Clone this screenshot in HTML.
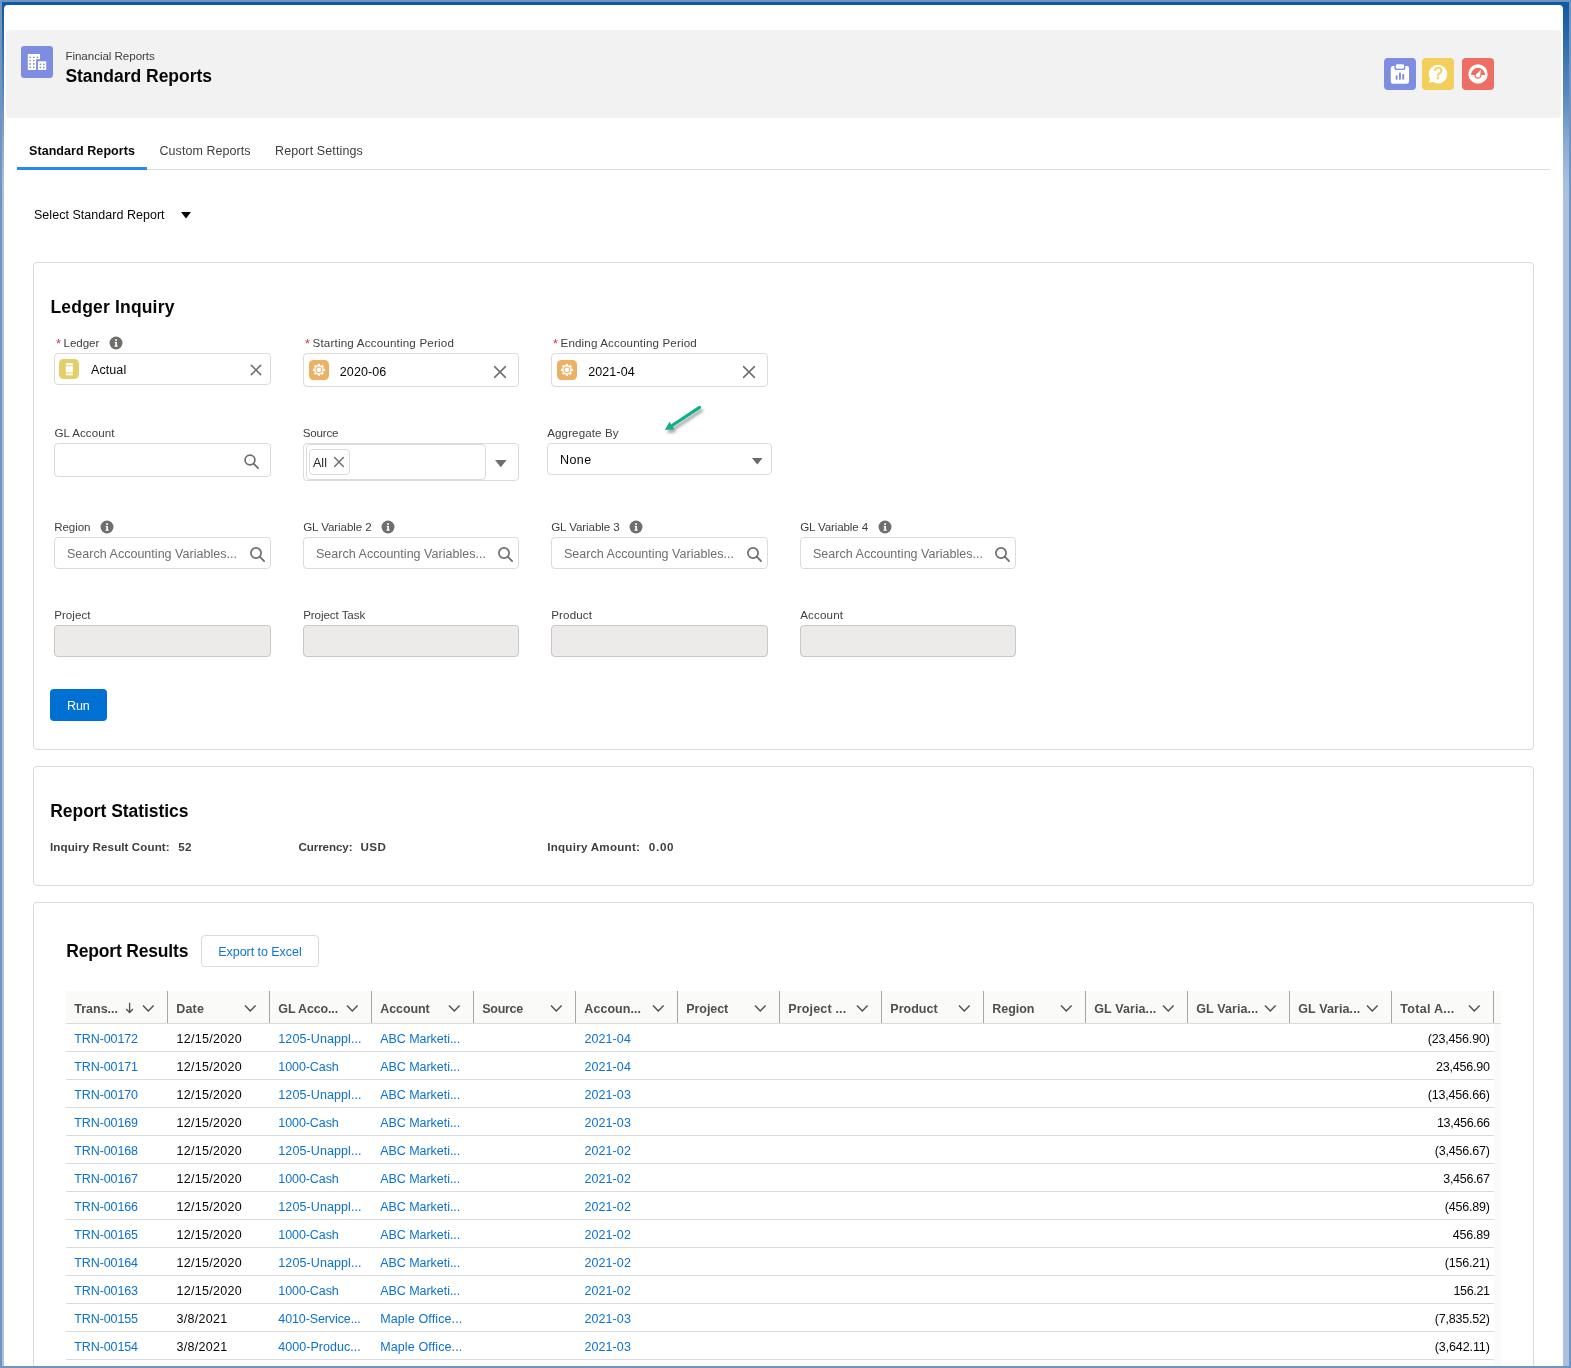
<!DOCTYPE html>
<html lang="en"><head><meta charset="utf-8"><title>Standard Reports</title>
<style>
html,body{margin:0;padding:0}
body{width:1571px;height:1368px;position:relative;overflow:hidden;background:#7193c2;font-family:"Liberation Sans",sans-serif;color:#080707;font-size:12px}
body *{box-sizing:border-box}
.abs,.t,.box,.card{position:absolute}
svg.abs{overflow:visible}
.frame{position:absolute;left:2px;top:2px;width:1567px;height:1364px;background:linear-gradient(to bottom,#1059a1 0,#2466aa 30px,#4079b5 60px,#5f8ec3 100px,#8aabd3 140px,#a8bfde 180px,#adc0dc 200px,#adc0dc 100%)}
.panel{position:absolute;left:4px;top:5px;width:1559px;height:1361px;background:#fff;border-radius:4px 4px 0 0}
.hdr{position:absolute;left:6px;top:30px;width:1555px;height:88px;background:#f3f2f2;border-radius:4px}
.t{white-space:nowrap;line-height:1;text-decoration:none;color:#080707}
.card{left:33px;width:1501px;border:1px solid #dddbda;border-radius:4px;background:#fff}
.box{border:1px solid #dddbda;border-radius:4px;background:#fff}
.dis{background:#ecebea;border-color:#c9c7c5}
.root{position:absolute;left:0;top:0;width:1571px;height:1368px;will-change:transform}
</style></head>
<body>
<div class="root">
<div class="frame"></div>
<div class="panel"></div>
<div class="hdr"></div>
<svg class="abs" style="left:21px;top:46px" width="32" height="32" viewBox="0 0 32 32"><rect width="32" height="32" rx="3.2" fill="#7f8de1"/><path d="M6.8 8.1h12.2v5.2h-3.9v10.6H6.8z" fill="#fff"/><rect x="17" y="15.3" width="8.2" height="8.6" fill="#fff"/><rect x="8.299999999999999" y="10.399999999999999" width="1.6" height="1.6" rx=".5" fill="#7f8de1"/><rect x="12.0" y="10.399999999999999" width="1.6" height="1.6" rx=".5" fill="#7f8de1"/><rect x="15.5" y="10.399999999999999" width="1.6" height="1.6" rx=".5" fill="#7f8de1"/><rect x="8.299999999999999" y="13.7" width="1.6" height="1.6" rx=".5" fill="#7f8de1"/><rect x="12.0" y="13.7" width="1.6" height="1.6" rx=".5" fill="#7f8de1"/><rect x="8.299999999999999" y="17.099999999999998" width="1.6" height="1.6" rx=".5" fill="#7f8de1"/><rect x="12.0" y="17.099999999999998" width="1.6" height="1.6" rx=".5" fill="#7f8de1"/><rect x="8.299999999999999" y="20.4" width="1.6" height="1.6" rx=".5" fill="#7f8de1"/><rect x="12.0" y="20.4" width="1.6" height="1.6" rx=".5" fill="#7f8de1"/><rect x="18.599999999999998" y="17.4" width="1.6" height="1.6" rx=".5" fill="#7f8de1"/><rect x="22.0" y="17.4" width="1.6" height="1.6" rx=".5" fill="#7f8de1"/><rect x="18.599999999999998" y="20.599999999999998" width="1.6" height="1.6" rx=".5" fill="#7f8de1"/><rect x="22.0" y="20.599999999999998" width="1.6" height="1.6" rx=".5" fill="#7f8de1"/></svg>
<div class="t" style="left:65.4px;top:50px;font-size:11.6px;color:#3e3e3c;letter-spacing:-0.05px">Financial Reports</div>
<div class="t" style="left:65.4px;top:68px;font-size:17.5px;font-weight:bold;letter-spacing:-0.01px">Standard Reports</div>
<svg class="abs" style="left:1384px;top:58px" width="32" height="32" viewBox="0 0 32 32"><rect width="32" height="32" rx="4" fill="#7f8de1"/><rect x="6.8" y="8" width="18.2" height="17.8" rx="2.2" fill="#fff"/><rect x="10.4" y="5.2" width="11" height="6.8" rx="2.6" fill="#7f8de1"/><rect x="11.7" y="6.3" width="8.5" height="4.4" rx="1.6" fill="#fff"/><rect x="11.7" y="17.3" width="1.8" height="4.4" rx=".6" fill="#7f8de1"/><rect x="15" y="14.6" width="1.9" height="7.1" rx=".6" fill="#7f8de1"/><rect x="18.3" y="16.1" width="1.9" height="5.6" rx=".6" fill="#7f8de1"/></svg>
<svg class="abs" style="left:1422px;top:58px" width="32" height="32" viewBox="0 0 32 32"><rect width="32" height="32" rx="4" fill="#f2cf5b"/><circle cx="16" cy="16.1" r="9.3" fill="#fff"/><path d="M8.2 20.5L6.9 24.8L12.5 23.6z" fill="#fff"/><text x="16.1" y="20.6" text-anchor="middle" font-family="Liberation Sans,sans-serif" font-size="16" stroke="#f2cf5b" stroke-width=".6" fill="#f2cf5b">?</text></svg>
<svg class="abs" style="left:1462px;top:58px" width="32" height="32" viewBox="0 0 32 32"><rect width="32" height="32" rx="4" fill="#ef6e64"/><circle cx="16" cy="16" r="9.7" fill="#fff"/><path d="M8.9 16.9A7.1 7.1 0 0 1 23.1 16.9z" fill="#ef6e64"/><circle cx="16" cy="17.4" r="3.3" fill="#ef6e64"/><circle cx="16" cy="17.4" r="2.2" fill="#fff"/><path d="M14.4 16.6L19.2 11.2L17.9 18.4z" fill="#fff"/></svg>
<div class="abs" style="left:17px;top:169px;width:1533px;height:1px;background:#dddbda"></div>
<div class="abs" style="left:17px;top:167px;width:130px;height:3px;background:#2a8aeb"></div>
<div class="t" style="left:29px;top:145px;font-size:12.5px;font-weight:bold;letter-spacing:0.07px">Standard Reports</div>
<div class="t" style="left:159.5px;top:145px;font-size:12.5px;color:#3e3e3c;letter-spacing:0.05px">Custom Reports</div>
<div class="t" style="left:275px;top:145px;font-size:12.5px;color:#3e3e3c;letter-spacing:0.12px">Report Settings</div>
<div class="t" style="left:34px;top:209px;font-size:12.5px;letter-spacing:0.03px">Select Standard Report</div>
<svg class="abs" style="left:179.8px;top:211.10000000000002px" width="12" height="8.4" viewBox="0 0 12 8.4"><path d="M1 1h10l-5 6.4z" fill="#080707"/></svg>
<div class="card" style="top:262px;height:488px"></div>
<div class="t" style="left:50.5px;top:299px;font-size:17.5px;font-weight:bold;letter-spacing:0.18px">Ledger Inquiry</div>
<div class="t" style="left:56px;top:338px;font-size:12.6px;color:#d9343f">*</div>
<div class="t" style="left:63.5px;top:337px;font-size:11.6px;color:#3e3e3c;letter-spacing:-0.05px">Ledger</div>
<svg class="abs" style="left:109px;top:335.8px" width="14" height="14" viewBox="0 0 14 14"><circle cx="7" cy="7" r="6.5" fill="#706e6b"/><rect x="6.1" y="3.2" width="1.9" height="1.8" rx=".4" fill="#fff"/><path d="M5.6 6h2.4v3.6h.7v1.1H5.5V9.6h.8V7.1h-.7z" fill="#fff"/></svg>
<div class="box" style="left:54px;top:353px;width:217px;height:32px"></div>
<svg class="abs" style="left:59px;top:359px" width="20" height="20" viewBox="0 0 20 20"><rect width="20" height="20" rx="4.5" fill="#e3cf6a"/><path d="M7.8 4h5.1l1 1v1.3H6.8V5z" fill="#fff"/><rect x="6.8" y="7.2" width="7.1" height="6.3" fill="#fff"/><rect x="6.8" y="14.5" width="7.1" height="1.7" rx=".5" fill="#fff"/></svg>
<div class="t" style="left:91px;top:364px;font-size:12.5px;letter-spacing:0.09px">Actual</div>
<svg class="abs" style="left:248px;top:362px" width="16" height="16" viewBox="0 0 16 16"><path d="M3.4000000000000004 3.4000000000000004L12.6 12.6M12.6 3.4000000000000004L3.4000000000000004 12.6" stroke="#706e6b" stroke-width="1.5" stroke-linecap="round" fill="none"/></svg>
<div class="t" style="left:305px;top:338px;font-size:12.6px;color:#d9343f">*</div>
<div class="t" style="left:312.5px;top:337px;font-size:11.6px;color:#3e3e3c;letter-spacing:0.19px">Starting Accounting Period</div>
<div class="box" style="left:303px;top:353px;width:216px;height:34px"></div>
<svg class="abs" style="left:309px;top:360px" width="20" height="20" viewBox="0 0 20 20"><rect width="20" height="20" rx="4.5" fill="#ecb165"/><g transform="translate(9.9 9.9)"><circle r="4.6" fill="#fff"/><rect x="-1.15" y="-6" width="2.3" height="2.4" fill="#fff" transform="rotate(0)"/><rect x="-1.15" y="-6" width="2.3" height="2.4" fill="#fff" transform="rotate(45)"/><rect x="-1.15" y="-6" width="2.3" height="2.4" fill="#fff" transform="rotate(90)"/><rect x="-1.15" y="-6" width="2.3" height="2.4" fill="#fff" transform="rotate(135)"/><rect x="-1.15" y="-6" width="2.3" height="2.4" fill="#fff" transform="rotate(180)"/><rect x="-1.15" y="-6" width="2.3" height="2.4" fill="#fff" transform="rotate(225)"/><rect x="-1.15" y="-6" width="2.3" height="2.4" fill="#fff" transform="rotate(270)"/><rect x="-1.15" y="-6" width="2.3" height="2.4" fill="#fff" transform="rotate(315)"/><circle r="3.3" fill="#ecb165"/><circle r="2.3" fill="#fff"/></g></svg>
<div class="t" style="left:339.8px;top:366px;font-size:12.5px;letter-spacing:0.1px">2020-06</div>
<svg class="abs" style="left:492px;top:363.5px" width="16" height="16" viewBox="0 0 16 16"><path d="M2.5999999999999996 2.5999999999999996L13.4 13.4M13.4 2.5999999999999996L2.5999999999999996 13.4" stroke="#706e6b" stroke-width="1.5" stroke-linecap="round" fill="none"/></svg>
<div class="t" style="left:553px;top:338px;font-size:12.6px;color:#d9343f">*</div>
<div class="t" style="left:560.5px;top:337px;font-size:11.6px;color:#3e3e3c;letter-spacing:0.15px">Ending Accounting Period</div>
<div class="box" style="left:551px;top:353px;width:217px;height:34px"></div>
<svg class="abs" style="left:557px;top:360px" width="20" height="20" viewBox="0 0 20 20"><rect width="20" height="20" rx="4.5" fill="#ecb165"/><g transform="translate(9.9 9.9)"><circle r="4.6" fill="#fff"/><rect x="-1.15" y="-6" width="2.3" height="2.4" fill="#fff" transform="rotate(0)"/><rect x="-1.15" y="-6" width="2.3" height="2.4" fill="#fff" transform="rotate(45)"/><rect x="-1.15" y="-6" width="2.3" height="2.4" fill="#fff" transform="rotate(90)"/><rect x="-1.15" y="-6" width="2.3" height="2.4" fill="#fff" transform="rotate(135)"/><rect x="-1.15" y="-6" width="2.3" height="2.4" fill="#fff" transform="rotate(180)"/><rect x="-1.15" y="-6" width="2.3" height="2.4" fill="#fff" transform="rotate(225)"/><rect x="-1.15" y="-6" width="2.3" height="2.4" fill="#fff" transform="rotate(270)"/><rect x="-1.15" y="-6" width="2.3" height="2.4" fill="#fff" transform="rotate(315)"/><circle r="3.3" fill="#ecb165"/><circle r="2.3" fill="#fff"/></g></svg>
<div class="t" style="left:588.2px;top:366px;font-size:12.5px;letter-spacing:0.1px">2021-04</div>
<svg class="abs" style="left:741px;top:363.5px" width="16" height="16" viewBox="0 0 16 16"><path d="M2.5999999999999996 2.5999999999999996L13.4 13.4M13.4 2.5999999999999996L2.5999999999999996 13.4" stroke="#706e6b" stroke-width="1.5" stroke-linecap="round" fill="none"/></svg>
<div class="t" style="left:54.4px;top:427px;font-size:11.6px;color:#3e3e3c;letter-spacing:0.05px">GL Account</div>
<div class="box" style="left:54px;top:443px;width:217px;height:34px"></div>
<svg class="abs" style="left:240.4px;top:450.4px" width="22" height="22" viewBox="0 0 22 22"><circle cx="10" cy="10" r="4.9" fill="none" stroke="#706e6b" stroke-width="1.7"/><path d="M13.528 13.528L18.1 18.1" stroke="#706e6b" stroke-width="1.8" stroke-linecap="round"/></svg>
<div class="t" style="left:302.7px;top:427px;font-size:11.6px;color:#3e3e3c;letter-spacing:-0.17px">Source</div>
<div class="box" style="left:303px;top:443px;width:216px;height:38px"></div>
<div class="box" style="left:306px;top:444px;width:180px;height:36px"></div>
<div class="box" style="left:309px;top:449px;width:41px;height:26px"></div>
<div class="t" style="left:313px;top:457px;font-size:12.5px;color:#2b2826;letter-spacing:0.03px">All</div>
<svg class="abs" style="left:331px;top:454.2px" width="16" height="16" viewBox="0 0 16 16"><path d="M3.5999999999999996 3.5999999999999996L12.4 12.4M12.4 3.5999999999999996L3.5999999999999996 12.4" stroke="#706e6b" stroke-width="1.4" stroke-linecap="round" fill="none"/></svg>
<svg class="abs" style="left:494.2px;top:459.2px" width="13.6" height="9.2" viewBox="0 0 13.6 9.2"><path d="M1 1h11.6l-5.8 7.2z" fill="#706e6b"/></svg>
<div class="t" style="left:547.2px;top:427px;font-size:11.6px;color:#3e3e3c;letter-spacing:0.11px">Aggregate By</div>
<div class="box" style="left:547px;top:443px;width:225px;height:32px"></div>
<div class="t" style="left:560px;top:454px;font-size:12.5px;letter-spacing:0.43px">None</div>
<svg class="abs" style="left:750.5px;top:456.6px" width="12.6" height="8.4" viewBox="0 0 12.6 8.4"><path d="M1 1h10.6l-5.3 6.4z" fill="#6b6966"/></svg>
<svg class="abs" style="left:655px;top:398px;filter:drop-shadow(2px 3.3px 1.7px rgba(0,0,0,.36))" width="60" height="40" viewBox="0 0 60 40"><path d="M44.5 9.4L17.5 27.3" stroke="#0eb08c" stroke-width="3.1" stroke-linecap="round" fill="none"/><path d="M9.9 31.9L14.4 23.7L19.3 31.3z" fill="#0eb08c"/></svg>
<div class="t" style="left:54.2px;top:521px;font-size:11.6px;color:#3e3e3c;letter-spacing:-0.08px">Region</div>
<svg class="abs" style="left:100px;top:520.0999999999999px" width="14" height="14" viewBox="0 0 14 14"><circle cx="7" cy="7" r="6.5" fill="#706e6b"/><rect x="6.1" y="3.2" width="1.9" height="1.8" rx=".4" fill="#fff"/><path d="M5.6 6h2.4v3.6h.7v1.1H5.5V9.6h.8V7.1h-.7z" fill="#fff"/></svg>
<div class="box" style="left:54px;top:537px;width:217px;height:32px"></div>
<div class="t" style="left:67px;top:548px;font-size:12.5px;color:#706e6b;letter-spacing:0.02px">Search Accounting Variables...</div>
<svg class="abs" style="left:245.5px;top:543.3px" width="22" height="22" viewBox="0 0 22 22"><circle cx="10" cy="10" r="5.1" fill="none" stroke="#706e6b" stroke-width="1.7"/><path d="M13.672 13.672L18.1 18.1" stroke="#706e6b" stroke-width="1.8" stroke-linecap="round"/></svg>
<div class="t" style="left:303.2px;top:521px;font-size:11.6px;color:#3e3e3c;letter-spacing:-0.09px">GL Variable 2</div>
<svg class="abs" style="left:381px;top:520.0999999999999px" width="14" height="14" viewBox="0 0 14 14"><circle cx="7" cy="7" r="6.5" fill="#706e6b"/><rect x="6.1" y="3.2" width="1.9" height="1.8" rx=".4" fill="#fff"/><path d="M5.6 6h2.4v3.6h.7v1.1H5.5V9.6h.8V7.1h-.7z" fill="#fff"/></svg>
<div class="box" style="left:303px;top:537px;width:216px;height:32px"></div>
<div class="t" style="left:316px;top:548px;font-size:12.5px;color:#706e6b;letter-spacing:0.02px">Search Accounting Variables...</div>
<svg class="abs" style="left:493.5px;top:543.3px" width="22" height="22" viewBox="0 0 22 22"><circle cx="10" cy="10" r="5.1" fill="none" stroke="#706e6b" stroke-width="1.7"/><path d="M13.672 13.672L18.1 18.1" stroke="#706e6b" stroke-width="1.8" stroke-linecap="round"/></svg>
<div class="t" style="left:551.2px;top:521px;font-size:11.6px;color:#3e3e3c;letter-spacing:-0.09px">GL Variable 3</div>
<svg class="abs" style="left:629px;top:520.0999999999999px" width="14" height="14" viewBox="0 0 14 14"><circle cx="7" cy="7" r="6.5" fill="#706e6b"/><rect x="6.1" y="3.2" width="1.9" height="1.8" rx=".4" fill="#fff"/><path d="M5.6 6h2.4v3.6h.7v1.1H5.5V9.6h.8V7.1h-.7z" fill="#fff"/></svg>
<div class="box" style="left:551px;top:537px;width:217px;height:32px"></div>
<div class="t" style="left:564px;top:548px;font-size:12.5px;color:#706e6b;letter-spacing:0.02px">Search Accounting Variables...</div>
<svg class="abs" style="left:742.5px;top:543.3px" width="22" height="22" viewBox="0 0 22 22"><circle cx="10" cy="10" r="5.1" fill="none" stroke="#706e6b" stroke-width="1.7"/><path d="M13.672 13.672L18.1 18.1" stroke="#706e6b" stroke-width="1.8" stroke-linecap="round"/></svg>
<div class="t" style="left:800.2px;top:521px;font-size:11.6px;color:#3e3e3c;letter-spacing:-0.14px">GL Variable 4</div>
<svg class="abs" style="left:878px;top:520.0999999999999px" width="14" height="14" viewBox="0 0 14 14"><circle cx="7" cy="7" r="6.5" fill="#706e6b"/><rect x="6.1" y="3.2" width="1.9" height="1.8" rx=".4" fill="#fff"/><path d="M5.6 6h2.4v3.6h.7v1.1H5.5V9.6h.8V7.1h-.7z" fill="#fff"/></svg>
<div class="box" style="left:800px;top:537px;width:216px;height:32px"></div>
<div class="t" style="left:813px;top:548px;font-size:12.5px;color:#706e6b;letter-spacing:0.02px">Search Accounting Variables...</div>
<svg class="abs" style="left:990.5px;top:543.3px" width="22" height="22" viewBox="0 0 22 22"><circle cx="10" cy="10" r="5.1" fill="none" stroke="#706e6b" stroke-width="1.7"/><path d="M13.672 13.672L18.1 18.1" stroke="#706e6b" stroke-width="1.8" stroke-linecap="round"/></svg>
<div class="t" style="left:54.2px;top:609px;font-size:11.6px;color:#3e3e3c;letter-spacing:0.03px">Project</div>
<div class="box dis" style="left:54px;top:625px;width:217px;height:32px"></div>
<div class="t" style="left:303.2px;top:609px;font-size:11.6px;color:#3e3e3c;letter-spacing:-0.08px">Project Task</div>
<div class="box dis" style="left:303px;top:625px;width:216px;height:32px"></div>
<div class="t" style="left:551.2px;top:609px;font-size:11.6px;color:#3e3e3c;letter-spacing:0.15px">Product</div>
<div class="box dis" style="left:551px;top:625px;width:217px;height:32px"></div>
<div class="t" style="left:800.2px;top:609px;font-size:11.6px;color:#3e3e3c;letter-spacing:0.16px">Account</div>
<div class="box dis" style="left:800px;top:625px;width:216px;height:32px"></div>
<div class="abs" style="left:50px;top:689px;width:57px;height:32px;background:#0070d2;border-radius:4px"></div>
<div class="t" style="left:67px;top:700px;font-size:12.5px;color:#fff;letter-spacing:-0.15px">Run</div>
<div class="card" style="top:766px;height:120px"></div>
<div class="t" style="left:50.3px;top:803px;font-size:17.5px;font-weight:bold;letter-spacing:-0.06px">Report Statistics</div>
<div class="t" style="left:50px;top:841px;font-size:11.6px;color:#3e3e3c;font-weight:bold;letter-spacing:0.09px">Inquiry Result Count:</div>
<div class="t" style="left:178.2px;top:841px;font-size:11.6px;color:#3e3e3c;font-weight:bold;letter-spacing:0.45px">52</div>
<div class="t" style="left:298.5px;top:841px;font-size:11.6px;color:#3e3e3c;font-weight:bold;letter-spacing:-0.09px">Currency:</div>
<div class="t" style="left:360.5px;top:841px;font-size:11.6px;color:#3e3e3c;font-weight:bold;letter-spacing:0.44px">USD</div>
<div class="t" style="left:547.2px;top:841px;font-size:11.6px;color:#3e3e3c;font-weight:bold;letter-spacing:0.26px">Inquiry Amount:</div>
<div class="t" style="left:648.8px;top:841px;font-size:11.6px;color:#3e3e3c;font-weight:bold;letter-spacing:0.71px">0.00</div>
<div class="card" style="top:902px;height:464px;border-bottom:0;border-radius:4px 4px 0 0"></div>
<div class="t" style="left:66.3px;top:943px;font-size:17.5px;font-weight:bold;letter-spacing:-0.18px">Report Results</div>
<div class="box" style="left:201px;top:935px;width:118px;height:32px"></div>
<div class="t" style="left:218.3px;top:946px;font-size:12.5px;color:#0c76d6;letter-spacing:-0.05px">Export to Excel</div>
<div class="abs" style="left:66px;top:991px;width:1435px;height:32px;background:#fafaf9"></div>
<div class="abs" style="left:1494px;top:1023px;width:7px;height:343px;background:#fafaf9"></div>
<div class="abs" style="left:66px;top:1023px;width:1435px;height:1px;background:#dddbda"></div>
<div class="t" style="left:74.3px;top:1003px;font-size:12.5px;color:#514f4d;font-weight:bold;letter-spacing:-0.01px">Trans...</div>
<svg class="abs" style="left:125px;top:1002px" width="10" height="12" viewBox="0 0 10 12"><path d="M4.6 .8V10.3M1.2 7L4.6 10.5L8 7" fill="none" stroke="#514f4d" stroke-width="1.3"/></svg>
<svg class="abs" style="left:142px;top:1004px" width="13" height="9" viewBox="0 0 13 9"><path d="M1 1.4L6.3 7L11.6 1.4" fill="none" stroke="#514f4d" stroke-width="1.4"/></svg>
<div class="abs" style="left:167px;top:991px;width:1px;height:32px;background:#a8a6a4"></div>
<div class="t" style="left:176.3px;top:1003px;font-size:12.5px;color:#514f4d;font-weight:bold;letter-spacing:0.15px">Date</div>
<svg class="abs" style="left:244px;top:1004px" width="13" height="9" viewBox="0 0 13 9"><path d="M1 1.4L6.3 7L11.6 1.4" fill="none" stroke="#514f4d" stroke-width="1.4"/></svg>
<div class="abs" style="left:269px;top:991px;width:1px;height:32px;background:#a8a6a4"></div>
<div class="t" style="left:278.3px;top:1003px;font-size:12.5px;color:#514f4d;font-weight:bold;letter-spacing:-0.14px">GL Acco...</div>
<svg class="abs" style="left:346px;top:1004px" width="13" height="9" viewBox="0 0 13 9"><path d="M1 1.4L6.3 7L11.6 1.4" fill="none" stroke="#514f4d" stroke-width="1.4"/></svg>
<div class="abs" style="left:371px;top:991px;width:1px;height:32px;background:#a8a6a4"></div>
<div class="t" style="left:380.3px;top:1003px;font-size:12.5px;color:#514f4d;font-weight:bold;letter-spacing:-0.1px">Account</div>
<svg class="abs" style="left:448px;top:1004px" width="13" height="9" viewBox="0 0 13 9"><path d="M1 1.4L6.3 7L11.6 1.4" fill="none" stroke="#514f4d" stroke-width="1.4"/></svg>
<div class="abs" style="left:473px;top:991px;width:1px;height:32px;background:#a8a6a4"></div>
<div class="t" style="left:482.3px;top:1003px;font-size:12.5px;color:#514f4d;font-weight:bold;letter-spacing:-0.3px">Source</div>
<svg class="abs" style="left:550px;top:1004px" width="13" height="9" viewBox="0 0 13 9"><path d="M1 1.4L6.3 7L11.6 1.4" fill="none" stroke="#514f4d" stroke-width="1.4"/></svg>
<div class="abs" style="left:575px;top:991px;width:1px;height:32px;background:#a8a6a4"></div>
<div class="t" style="left:584.3px;top:1003px;font-size:12.5px;color:#514f4d;font-weight:bold;letter-spacing:0.06px">Accoun...</div>
<svg class="abs" style="left:652px;top:1004px" width="13" height="9" viewBox="0 0 13 9"><path d="M1 1.4L6.3 7L11.6 1.4" fill="none" stroke="#514f4d" stroke-width="1.4"/></svg>
<div class="abs" style="left:677px;top:991px;width:1px;height:32px;background:#a8a6a4"></div>
<div class="t" style="left:686.3px;top:1003px;font-size:12.5px;color:#514f4d;font-weight:bold;letter-spacing:-0.08px">Project</div>
<svg class="abs" style="left:754px;top:1004px" width="13" height="9" viewBox="0 0 13 9"><path d="M1 1.4L6.3 7L11.6 1.4" fill="none" stroke="#514f4d" stroke-width="1.4"/></svg>
<div class="abs" style="left:779px;top:991px;width:1px;height:32px;background:#a8a6a4"></div>
<div class="t" style="left:788.3px;top:1003px;font-size:12.5px;color:#514f4d;font-weight:bold;letter-spacing:0.16px">Project ...</div>
<svg class="abs" style="left:856px;top:1004px" width="13" height="9" viewBox="0 0 13 9"><path d="M1 1.4L6.3 7L11.6 1.4" fill="none" stroke="#514f4d" stroke-width="1.4"/></svg>
<div class="abs" style="left:881px;top:991px;width:1px;height:32px;background:#a8a6a4"></div>
<div class="t" style="left:890.3px;top:1003px;font-size:12.5px;color:#514f4d;font-weight:bold;letter-spacing:0.02px">Product</div>
<svg class="abs" style="left:958px;top:1004px" width="13" height="9" viewBox="0 0 13 9"><path d="M1 1.4L6.3 7L11.6 1.4" fill="none" stroke="#514f4d" stroke-width="1.4"/></svg>
<div class="abs" style="left:983px;top:991px;width:1px;height:32px;background:#a8a6a4"></div>
<div class="t" style="left:992.3px;top:1003px;font-size:12.5px;color:#514f4d;font-weight:bold;letter-spacing:-0.04px">Region</div>
<svg class="abs" style="left:1060px;top:1004px" width="13" height="9" viewBox="0 0 13 9"><path d="M1 1.4L6.3 7L11.6 1.4" fill="none" stroke="#514f4d" stroke-width="1.4"/></svg>
<div class="abs" style="left:1085px;top:991px;width:1px;height:32px;background:#a8a6a4"></div>
<div class="t" style="left:1094.3px;top:1003px;font-size:12.5px;color:#514f4d;font-weight:bold;letter-spacing:0.1px">GL Varia...</div>
<svg class="abs" style="left:1162px;top:1004px" width="13" height="9" viewBox="0 0 13 9"><path d="M1 1.4L6.3 7L11.6 1.4" fill="none" stroke="#514f4d" stroke-width="1.4"/></svg>
<div class="abs" style="left:1187px;top:991px;width:1px;height:32px;background:#a8a6a4"></div>
<div class="t" style="left:1196.3px;top:1003px;font-size:12.5px;color:#514f4d;font-weight:bold;letter-spacing:0.1px">GL Varia...</div>
<svg class="abs" style="left:1264px;top:1004px" width="13" height="9" viewBox="0 0 13 9"><path d="M1 1.4L6.3 7L11.6 1.4" fill="none" stroke="#514f4d" stroke-width="1.4"/></svg>
<div class="abs" style="left:1289px;top:991px;width:1px;height:32px;background:#a8a6a4"></div>
<div class="t" style="left:1298.3px;top:1003px;font-size:12.5px;color:#514f4d;font-weight:bold;letter-spacing:0.1px">GL Varia...</div>
<svg class="abs" style="left:1366px;top:1004px" width="13" height="9" viewBox="0 0 13 9"><path d="M1 1.4L6.3 7L11.6 1.4" fill="none" stroke="#514f4d" stroke-width="1.4"/></svg>
<div class="abs" style="left:1391px;top:991px;width:1px;height:32px;background:#a8a6a4"></div>
<div class="t" style="left:1400.3px;top:1003px;font-size:12.5px;color:#514f4d;font-weight:bold;letter-spacing:0.29px">Total A...</div>
<svg class="abs" style="left:1468px;top:1004px" width="13" height="9" viewBox="0 0 13 9"><path d="M1 1.4L6.3 7L11.6 1.4" fill="none" stroke="#514f4d" stroke-width="1.4"/></svg>
<div class="abs" style="left:1493px;top:991px;width:1px;height:32px;background:#a8a6a4"></div>
<div class="abs" style="left:66px;top:1051px;width:1428px;height:1px;background:#dddbda"></div>
<a class="t" style="left:74.3px;top:1033px;font-size:12.5px;color:#0a72d0;letter-spacing:-0.11px">TRN-00172</a>
<div class="t" style="left:176.6px;top:1033px;font-size:12.5px;letter-spacing:0.29px">12/15/2020</div>
<a class="t" style="left:278.3px;top:1033px;font-size:12.5px;color:#0a72d0;letter-spacing:0.1px">1205-Unappl...</a>
<a class="t" style="left:380.2px;top:1033px;font-size:12.5px;color:#0a72d0;letter-spacing:-0.04px">ABC Marketi...</a>
<a class="t" style="left:584.4px;top:1033px;font-size:12.5px;color:#0a72d0;letter-spacing:0.1px">2021-04</a>
<div class="t" style="right:81.29999999999995px;top:1033px;font-size:12.5px;letter-spacing:-0.18px">(23,456.90)</div>
<div class="abs" style="left:66px;top:1079px;width:1428px;height:1px;background:#dddbda"></div>
<a class="t" style="left:74.3px;top:1061px;font-size:12.5px;color:#0a72d0;letter-spacing:-0.11px">TRN-00171</a>
<div class="t" style="left:176.6px;top:1061px;font-size:12.5px;letter-spacing:0.29px">12/15/2020</div>
<a class="t" style="left:278.3px;top:1061px;font-size:12.5px;color:#0a72d0;letter-spacing:-0.08px">1000-Cash</a>
<a class="t" style="left:380.2px;top:1061px;font-size:12.5px;color:#0a72d0;letter-spacing:-0.04px">ABC Marketi...</a>
<a class="t" style="left:584.4px;top:1061px;font-size:12.5px;color:#0a72d0;letter-spacing:0.1px">2021-04</a>
<div class="t" style="right:81.29999999999995px;top:1061px;font-size:12.5px;letter-spacing:-0.21px">23,456.90</div>
<div class="abs" style="left:66px;top:1107px;width:1428px;height:1px;background:#dddbda"></div>
<a class="t" style="left:74.3px;top:1089px;font-size:12.5px;color:#0a72d0;letter-spacing:-0.11px">TRN-00170</a>
<div class="t" style="left:176.6px;top:1089px;font-size:12.5px;letter-spacing:0.29px">12/15/2020</div>
<a class="t" style="left:278.3px;top:1089px;font-size:12.5px;color:#0a72d0;letter-spacing:0.1px">1205-Unappl...</a>
<a class="t" style="left:380.2px;top:1089px;font-size:12.5px;color:#0a72d0;letter-spacing:-0.04px">ABC Marketi...</a>
<a class="t" style="left:584.4px;top:1089px;font-size:12.5px;color:#0a72d0;letter-spacing:0.1px">2021-03</a>
<div class="t" style="right:81.29999999999995px;top:1089px;font-size:12.5px;letter-spacing:-0.18px">(13,456.66)</div>
<div class="abs" style="left:66px;top:1135px;width:1428px;height:1px;background:#dddbda"></div>
<a class="t" style="left:74.3px;top:1117px;font-size:12.5px;color:#0a72d0;letter-spacing:-0.11px">TRN-00169</a>
<div class="t" style="left:176.6px;top:1117px;font-size:12.5px;letter-spacing:0.29px">12/15/2020</div>
<a class="t" style="left:278.3px;top:1117px;font-size:12.5px;color:#0a72d0;letter-spacing:-0.08px">1000-Cash</a>
<a class="t" style="left:380.2px;top:1117px;font-size:12.5px;color:#0a72d0;letter-spacing:-0.04px">ABC Marketi...</a>
<a class="t" style="left:584.4px;top:1117px;font-size:12.5px;color:#0a72d0;letter-spacing:0.1px">2021-03</a>
<div class="t" style="right:81.29999999999995px;top:1117px;font-size:12.5px;letter-spacing:-0.32px">13,456.66</div>
<div class="abs" style="left:66px;top:1163px;width:1428px;height:1px;background:#dddbda"></div>
<a class="t" style="left:74.3px;top:1145px;font-size:12.5px;color:#0a72d0;letter-spacing:-0.11px">TRN-00168</a>
<div class="t" style="left:176.6px;top:1145px;font-size:12.5px;letter-spacing:0.29px">12/15/2020</div>
<a class="t" style="left:278.3px;top:1145px;font-size:12.5px;color:#0a72d0;letter-spacing:0.1px">1205-Unappl...</a>
<a class="t" style="left:380.2px;top:1145px;font-size:12.5px;color:#0a72d0;letter-spacing:-0.04px">ABC Marketi...</a>
<a class="t" style="left:584.4px;top:1145px;font-size:12.5px;color:#0a72d0;letter-spacing:0.1px">2021-02</a>
<div class="t" style="right:81.29999999999995px;top:1145px;font-size:12.5px;letter-spacing:-0.2px">(3,456.67)</div>
<div class="abs" style="left:66px;top:1191px;width:1428px;height:1px;background:#dddbda"></div>
<a class="t" style="left:74.3px;top:1173px;font-size:12.5px;color:#0a72d0;letter-spacing:-0.11px">TRN-00167</a>
<div class="t" style="left:176.6px;top:1173px;font-size:12.5px;letter-spacing:0.29px">12/15/2020</div>
<a class="t" style="left:278.3px;top:1173px;font-size:12.5px;color:#0a72d0;letter-spacing:-0.08px">1000-Cash</a>
<a class="t" style="left:380.2px;top:1173px;font-size:12.5px;color:#0a72d0;letter-spacing:-0.04px">ABC Marketi...</a>
<a class="t" style="left:584.4px;top:1173px;font-size:12.5px;color:#0a72d0;letter-spacing:0.1px">2021-02</a>
<div class="t" style="right:81.29999999999995px;top:1173px;font-size:12.5px;letter-spacing:-0.27px">3,456.67</div>
<div class="abs" style="left:66px;top:1219px;width:1428px;height:1px;background:#dddbda"></div>
<a class="t" style="left:74.3px;top:1201px;font-size:12.5px;color:#0a72d0;letter-spacing:-0.11px">TRN-00166</a>
<div class="t" style="left:176.6px;top:1201px;font-size:12.5px;letter-spacing:0.29px">12/15/2020</div>
<a class="t" style="left:278.3px;top:1201px;font-size:12.5px;color:#0a72d0;letter-spacing:0.1px">1205-Unappl...</a>
<a class="t" style="left:380.2px;top:1201px;font-size:12.5px;color:#0a72d0;letter-spacing:-0.04px">ABC Marketi...</a>
<a class="t" style="left:584.4px;top:1201px;font-size:12.5px;color:#0a72d0;letter-spacing:0.1px">2021-02</a>
<div class="t" style="right:81.29999999999995px;top:1201px;font-size:12.5px;letter-spacing:-0.2px">(456.89)</div>
<div class="abs" style="left:66px;top:1247px;width:1428px;height:1px;background:#dddbda"></div>
<a class="t" style="left:74.3px;top:1229px;font-size:12.5px;color:#0a72d0;letter-spacing:-0.11px">TRN-00165</a>
<div class="t" style="left:176.6px;top:1229px;font-size:12.5px;letter-spacing:0.29px">12/15/2020</div>
<a class="t" style="left:278.3px;top:1229px;font-size:12.5px;color:#0a72d0;letter-spacing:-0.08px">1000-Cash</a>
<a class="t" style="left:380.2px;top:1229px;font-size:12.5px;color:#0a72d0;letter-spacing:-0.04px">ABC Marketi...</a>
<a class="t" style="left:584.4px;top:1229px;font-size:12.5px;color:#0a72d0;letter-spacing:0.1px">2021-02</a>
<div class="t" style="right:81.29999999999995px;top:1229px;font-size:12.5px;letter-spacing:-0.21px">456.89</div>
<div class="abs" style="left:66px;top:1275px;width:1428px;height:1px;background:#dddbda"></div>
<a class="t" style="left:74.3px;top:1257px;font-size:12.5px;color:#0a72d0;letter-spacing:-0.11px">TRN-00164</a>
<div class="t" style="left:176.6px;top:1257px;font-size:12.5px;letter-spacing:0.29px">12/15/2020</div>
<a class="t" style="left:278.3px;top:1257px;font-size:12.5px;color:#0a72d0;letter-spacing:0.1px">1205-Unappl...</a>
<a class="t" style="left:380.2px;top:1257px;font-size:12.5px;color:#0a72d0;letter-spacing:-0.04px">ABC Marketi...</a>
<a class="t" style="left:584.4px;top:1257px;font-size:12.5px;color:#0a72d0;letter-spacing:0.1px">2021-02</a>
<div class="t" style="right:81.29999999999995px;top:1257px;font-size:12.5px;letter-spacing:-0.2px">(156.21)</div>
<div class="abs" style="left:66px;top:1303px;width:1428px;height:1px;background:#dddbda"></div>
<a class="t" style="left:74.3px;top:1285px;font-size:12.5px;color:#0a72d0;letter-spacing:-0.11px">TRN-00163</a>
<div class="t" style="left:176.6px;top:1285px;font-size:12.5px;letter-spacing:0.29px">12/15/2020</div>
<a class="t" style="left:278.3px;top:1285px;font-size:12.5px;color:#0a72d0;letter-spacing:-0.08px">1000-Cash</a>
<a class="t" style="left:380.2px;top:1285px;font-size:12.5px;color:#0a72d0;letter-spacing:-0.04px">ABC Marketi...</a>
<a class="t" style="left:584.4px;top:1285px;font-size:12.5px;color:#0a72d0;letter-spacing:0.1px">2021-02</a>
<div class="t" style="right:81.29999999999995px;top:1285px;font-size:12.5px;letter-spacing:-0.34px">156.21</div>
<div class="abs" style="left:66px;top:1331px;width:1428px;height:1px;background:#dddbda"></div>
<a class="t" style="left:74.3px;top:1313px;font-size:12.5px;color:#0a72d0;letter-spacing:-0.11px">TRN-00155</a>
<div class="t" style="left:176.6px;top:1313px;font-size:12.5px;letter-spacing:0.27px">3/8/2021</div>
<a class="t" style="left:278.3px;top:1313px;font-size:12.5px;color:#0a72d0;letter-spacing:-0.11px">4010-Service...</a>
<a class="t" style="left:380.2px;top:1313px;font-size:12.5px;color:#0a72d0;letter-spacing:0.12px">Maple Office...</a>
<a class="t" style="left:584.4px;top:1313px;font-size:12.5px;color:#0a72d0;letter-spacing:0.1px">2021-03</a>
<div class="t" style="right:81.29999999999995px;top:1313px;font-size:12.5px;letter-spacing:-0.2px">(7,835.52)</div>
<div class="abs" style="left:66px;top:1359px;width:1428px;height:1px;background:#dddbda"></div>
<a class="t" style="left:74.3px;top:1341px;font-size:12.5px;color:#0a72d0;letter-spacing:-0.11px">TRN-00154</a>
<div class="t" style="left:176.6px;top:1341px;font-size:12.5px;letter-spacing:0.27px">3/8/2021</div>
<a class="t" style="left:278.3px;top:1341px;font-size:12.5px;color:#0a72d0;letter-spacing:0.04px">4000-Produc...</a>
<a class="t" style="left:380.2px;top:1341px;font-size:12.5px;color:#0a72d0;letter-spacing:0.12px">Maple Office...</a>
<a class="t" style="left:584.4px;top:1341px;font-size:12.5px;color:#0a72d0;letter-spacing:0.1px">2021-03</a>
<div class="t" style="right:81.29999999999995px;top:1341px;font-size:12.5px;letter-spacing:-0.11px">(3,642.11)</div>
</div>
</body></html>
